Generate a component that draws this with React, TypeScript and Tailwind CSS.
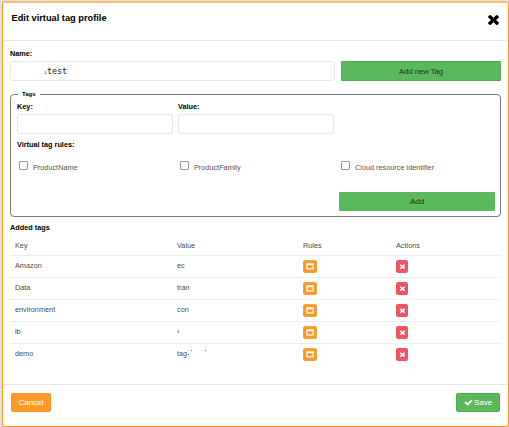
const rows = [
  { key: 'Amazon', value: 'ec' },
  { key: 'Data', value: 'tran' },
  { key: 'environment', value: 'con' },
  { key: 'lb', value: '‹' },
  { key: 'demo', value: 'tag', masked: true },
];

function Times({ className }: { className: string }) {
  return (
    <svg viewBox="302 238 1188 1316" preserveAspectRatio="none" className={className} fill="currentColor">
      <path d="M1490 1322q0 40-28 68l-136 136q-28 28-68 28t-68-28l-294-294-294 294q-28 28-68 28t-68-28l-136-136q-28-28-28-68t28-68l294-294-294-294q-28-28-28-68t28-68l136-136q28-28 68-28t68 28l294 294 294-294q28-28 68-28t68 28l136 136q28 28 28 68t-28 68l-294 294 294 294q28 28 28 68z" />
    </svg>
  );
}

function Check() {
  return (
    <svg viewBox="0 0 1792 1792" className="h-[9px] w-[9px]" fill="currentColor">
      <path d="M1671 566q0 40-28 68l-724 724-136 136q-28 28-68 28t-68-28l-136-136-362-362q-28-28-28-68t28-68l136-136q28-28 68-28t68 28l294 295 656-657q28-28 68-28t68 28l136 136q28 28 28 68z" />
    </svg>
  );
}

function WindowIcon() {
  return (
    <svg viewBox="0 0 8 7" className="h-[7px] w-[8px]">
      <path fill="#fff" fillRule="evenodd" d="M.3.3h7.4v6.2H.3zM1.5 2.2v3h5v-3z" />
    </svg>
  );
}

function Rule({ label }: { label: string }) {
  return (
    <label className="flex w-[161px] shrink-0 items-start">
      <span className="h-[9px] w-[9px] rounded-[1px] border border-[#999] bg-white" />
      <span className="ml-[5px] mt-[2px] whitespace-nowrap leading-[10px] text-[#555]">{label}</span>
    </label>
  );
}

export default function App() {
  return (
    <div className="h-[427px] w-[509px] overflow-hidden bg-[#dfe0e2] pl-[2px] pt-[1px] font-['Liberation_Sans',Arial,sans-serif] text-[7.3px] leading-[10px] text-black">
      <div className="flex h-[426px] w-[507px] flex-col rounded-[3px] border border-t-2 border-[#ff9416] border-t-[#ffbd70] bg-white px-[1px]">
        <header className="flex h-[38px] shrink-0 items-start justify-between border-b border-[#e8e8e8] pl-[7.5px] pr-[8px]">
          <h1 className="mt-[8px] text-[9.25px] font-bold leading-[14px]">Edit virtual tag profile</h1>
          <Times className="mt-[11px] h-[11px] w-[11px]" />
        </header>

        <main className="h-[343px] shrink-0 pl-[6px] pr-[6px]">
          <div className="h-[20px] pt-[7px] font-bold leading-[11px]">Name:</div>
          <div className="flex h-[20px] justify-between">
            <div className="w-[325px] rounded-[3px] border border-[#e8e8e8] pl-[33px] font-['DejaVu_Sans_Mono',monospace] text-[8.3px] leading-[18px] text-[#222]">
              <span className="text-[5px]">ı</span>test
            </div>
            <button className="w-[160px] rounded-[1px] border border-[#4cae4c] bg-[#5cb85c] text-[7.6px] leading-[11px] text-[#17351a]">Add new Tag</button>
          </div>

          <fieldset className="mt-[8px] h-[128px] min-w-0 rounded-[4px] border border-[#777] px-[6px]">
            <legend className="ml-[1px] h-[10px] px-[4px] text-[6px] font-bold leading-[10px]">Tags</legend>
            <div className="flex gap-[5px]">
              <div className="w-[156px]">
                <div className="h-[15px] font-bold leading-[15px]">Key:</div>
                <div className="h-[20px] rounded-[2px] border border-[#e8e8e8]" />
              </div>
              <div className="w-[156px]">
                <div className="h-[15px] font-bold leading-[15px]">Value:</div>
                <div className="h-[20px] rounded-[2px] border border-[#e8e8e8]" />
              </div>
            </div>
            <div className="mt-[5px] font-bold leading-[11px]">Virtual tag rules:</div>
            <div className="mt-[11px] flex h-[12px] pl-[2px]">
              <Rule label="ProductName" />
              <Rule label="ProductFamily" />
              <Rule label="Cloud resource identifier" />
            </div>
            <div className="mt-[19px] flex justify-end">
              <button className="-mr-[1px] h-[19px] w-[156px] rounded-[1px] bg-[#5cb85c] text-[8px] text-[#17351a]">Add</button>
            </div>
          </fieldset>

          <h2 className="mt-[6px] font-bold">Added tags</h2>
          <div className="text-[#4c4c4c]">
            <div className="grid h-[23px] grid-cols-[162px_126px_93px_1fr] border-b border-[#eee] pl-[5px] pt-[8px]">
              <span>Key</span><span>Value</span><span>Rules</span><span>Actions</span>
            </div>
            {rows.map((r) => (
              <div key={r.key} className="grid h-[22px] grid-cols-[162px_126px_93px_1fr] items-start border-b border-[#eee] pl-[5px] pt-[4px] last:border-transparent">
                <span className="mt-[1px]">{r.key}</span>
                <span className="mt-[1px] flex">
                  {r.value}
                  {r.masked && (
                    <>
                      <span className="ml-[1px] mt-[5px] h-px w-px bg-[#555]" />
                      <span className="ml-[2px] mt-[1px] h-px w-px bg-[#777]" />
                      <span className="ml-[13px] mt-[1px] h-px w-px bg-[#777]" />
                    </>
                  )}
                </span>
                <span className="flex h-[13px] w-[14px] items-center justify-center rounded-[2px] border border-[#ffa234] bg-[#ff9824]"><WindowIcon /></span>
                <span className="flex h-[13px] w-[12px] items-center justify-center rounded-[2px] bg-[#ed5565] text-white"><Times className="h-[5px] w-[5px]" /></span>
              </div>
            ))}
          </div>
        </main>

        <footer className="flex flex-1 items-start justify-between border-t border-[#e5e5e5] pl-[7px] pr-[7px] pt-[8px] text-[8px] text-white">
          <button className="h-[19px] w-[40px] rounded-[2px] border border-[#ff9416] bg-[#ff9a28]">Cancel</button>
          <button className="flex h-[19px] w-[44px] items-center justify-center gap-[1px] rounded-[2px] border border-[#4cae4c] bg-[#5cb85c]">
            <Check />Save
          </button>
        </footer>
      </div>
    </div>
  );
}
